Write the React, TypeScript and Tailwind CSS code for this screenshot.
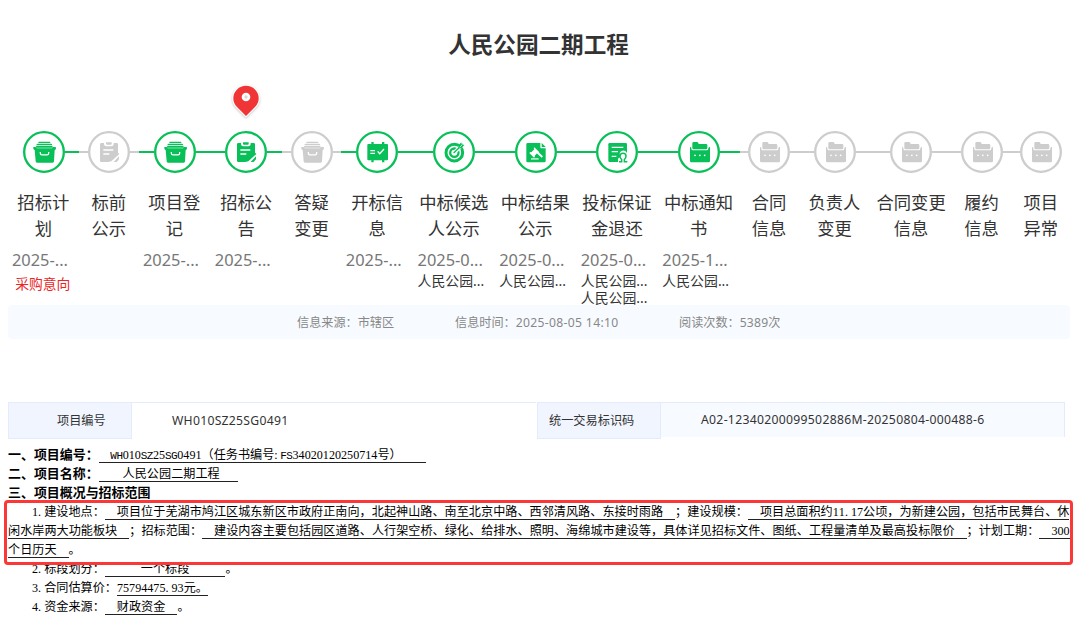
import React from "react";

type IconName = "box" | "note" | "board" | "target" | "gavel" | "deposit" | "folder";

interface Step {
  lines: [string, string];
  icon: IconName;
  done: boolean;
  date?: string;
  notes?: string[];
  link?: string;
  pin?: boolean;
  width: string;
}

const W2 = "w-[59.200px]";
const W3 = "w-[71.800px]";
const W4 = "w-[81.600px]";

const steps: Step[] = [
  { lines: ["招标计", "划"], icon: "box", done: true, date: "2025-...", link: "采购意向", width: W3 },
  { lines: ["标前", "公示"], icon: "note", done: false, width: W2 },
  { lines: ["项目登", "记"], icon: "box", done: true, date: "2025-...", width: W3 },
  { lines: ["招标公", "告"], icon: "note", done: true, date: "2025-...", pin: true, width: W3 },
  { lines: ["答疑", "变更"], icon: "box", done: false, width: W2 },
  { lines: ["开标信", "息"], icon: "board", done: true, date: "2025-...", width: W3 },
  { lines: ["中标候选", "人公示"], icon: "target", done: true, date: "2025-0...", notes: ["人民公园..."], width: W4 },
  { lines: ["中标结果", "公示"], icon: "gavel", done: true, date: "2025-0...", notes: ["人民公园..."], width: W4 },
  { lines: ["投标保证", "金退还"], icon: "deposit", done: true, date: "2025-0...", notes: ["人民公园...", "人民公园..."], width: W4 },
  { lines: ["中标通知", "书"], icon: "folder", done: true, date: "2025-1...", notes: ["人民公园..."], width: W4 },
  { lines: ["合同", "信息"], icon: "folder", done: false, width: W2 },
  { lines: ["负责人", "变更"], icon: "folder", done: false, width: W3 },
  { lines: ["合同变更", "信息"], icon: "folder", done: false, width: W4 },
  { lines: ["履约", "信息"], icon: "folder", done: false, width: W2 },
  { lines: ["项目", "异常"], icon: "folder", done: false, width: W2 },
];

function Glyph({ name }: { name: IconName }) {
  switch (name) {
    case "box":
      return (
        <>
          <rect x="46" y="32.500" width="36" height="3.500" rx="1.700" />
          <path d="M44 38.500h40q3 0 4 4H40q1-4 4-4z" />
          <path d="M40 45h48l2 5H38z" />
          <path d="M32 48h6l3 3.500h46l3-3.500h6q4 0 3 4l-1 3q0 2-3 2l-2 34q0 4-4 4H42q-4 0-4-4l-3-34q-3 0-3-2l-1-3q-1-4 1-4z" />
          <path d="M52 63v3.500q0 5 5 5h15q5 0 5-5V63" fill="none" stroke="#fff" strokeWidth="4" />
        </>
      );
    case "note":
      return (
        <>
          <path d="M40 36h8v3q0 7 7 7h15q7 0 7-7v-3h9q4 0 4 4v53H40q-4 0-4-4V40q0-4 4-4z" />
          <path d="M54 34h17v4q0 3-3 3H57q-3 0-3-3z" />
          <path d="M46 57h30M46 69h18" stroke="#fff" strokeWidth="4" />
          <path d="M58 96L89 65l8 4v27z" fill="#fff" />
          <path d="M61 93l3-8 24-22 6 6-24 22zM77 93l16-17v9l-7 8z" />
        </>
      );
    case "board":
      return (
        <>
          <path d="M37 39h9v-6h7v6h25v-6h7v6h8q3 0 3 3v43q0 3-3 3h-8v6h-7v-6H53v6h-7v-6h-9q-3 0-3-3V42q0-3 3-3z" />
          <path d="M43 59h14M43 67h14" stroke="#fff" strokeWidth="4" />
          <path d="M65 61l6 7 13-14" fill="none" stroke="#fff" strokeWidth="4" />
        </>
      );
    case "target":
      return (
        <>
          <circle cx="64" cy="65" r="25" fill="none" stroke="currentColor" strokeWidth="9" />
          <circle cx="64" cy="65" r="12.500" fill="none" stroke="currentColor" strokeWidth="7" />
          <path d="M64 65L93 36" stroke="#fff" strokeWidth="11" />
          <path d="M62 66L90 39" stroke="currentColor" strokeWidth="4" />
          <path d="M76 52v-9l9-9 1 7 8 1-9 10z" />
          <path d="M80 49l9-9" stroke="#fff" strokeWidth="2" />
        </>
      );
    case "gavel":
      return (
        <>
          <path d="M38 36h38v13q0 3 3 3h13v38q0 4-4 4H38q-4 0-4-4V40q0-4 4-4z" />
          <path d="M80 36l12 12H80z" />
          <g fill="#fff">
            <path d="M58 49l15 15-3 3-3-1-8 8 1 3-3 3-14-14 3-3 3 1 9-9-2-3z" />
            <path d="M65 67l5-4 14 13-4 4z" />
            <rect x="48" y="82" width="23" height="3.500" />
          </g>
        </>
      );
    case "deposit":
      return (
        <>
          <rect x="37" y="36" width="56" height="57" rx="4" />
          <path d="M47 49h35M47 62h19M47 76h14" stroke="#fff" strokeWidth="4" />
          <path d="M66 96V83l7-6q-5-10 2-16 7-5 14 0 5 4 4 10h4v25z" fill="#fff" />
          <path
            d="M69 92h8v-6q-5-4-5-10 0-9 9-9t9 9q0 6-5 10v6h9"
            fill="none"
            stroke="currentColor"
            strokeWidth="4.500"
          />
        </>
      );
    case "folder":
      return (
        <>
          <path d="M47 33h10q3 0 4 3l1 3h22q4 0 4 4v8q0 4-4 4H47q-4 0-4-4V37q0-4 4-4z" />
          <path d="M36 47l4 3v3q0 4.500 5 4.500h41q5 0 5-4.500v-3l5-3v43q0 4-4 4H40q-4 0-4-4z" />
          <g fill="#fff">
            <circle cx="51" cy="73" r="2.600" />
            <circle cx="65.500" cy="73" r="2.600" />
            <circle cx="80" cy="73" r="2.600" />
          </g>
        </>
      );
  }
}

function Pin() {
  return (
    <svg
      viewBox="0 0 32 38"
      className="absolute -top-[49px] left-1/2 h-[38px] w-8 -translate-x-1/2 drop-shadow-[0_1px_1px_rgba(0,0,0,0.22)]"
    >
      <path
        d="M16 3.800a12.700 12.700 0 0 0-12.700 12.700c0 4 1.800 6.600 4.200 9L16 34l8.500-8.500c2.400-2.400 4.200-5 4.200-9A12.700 12.700 0 0 0 16 3.800z"
        fill="#ef3535"
        stroke="#fff"
        strokeWidth="2.400"
        strokeLinejoin="round"
        paintOrder="stroke"
      />
      <circle cx="16" cy="15" r="4.300" fill="#fff" />
      <circle cx="16" cy="15" r="1.700" fill="#d8d8d8" />
    </svg>
  );
}

function StepCell({ step, first, last }: { step: Step; first: boolean; last: boolean }) {
  const line = step.done ? "bg-[#08bf58]" : "bg-[#cdcdcd]";
  return (
    <div className={`${step.width} shrink-0`}>
      <div className="flex h-[42px] items-center">
        <div className={`h-[1.500px] flex-1 ${first ? "" : line}`} />
        <div className={`relative h-[42px] w-[42px] shrink-0 ${step.done ? "text-[#08bf58]" : "text-[#cdcdcd]"}`}>
          {step.pin && <Pin />}
          <svg viewBox="0 0 126 126" className="h-full w-full" fill="currentColor">
            <circle cx="63" cy="63" r="59.500" fill="#fff" stroke="currentColor" strokeWidth="7" />
            <Glyph name={step.icon} />
          </svg>
        </div>
        <div className={`h-[1.500px] flex-1 ${last ? "" : line}`} />
      </div>
      <div className="mt-[17px] pr-[0.600px] text-center text-[17.300px] leading-[26px] whitespace-nowrap text-[#333]">
        <div>{step.lines[0]}</div>
        <div>{step.lines[1]}</div>
      </div>
      <div className="mt-[5px] h-[25px] pl-[4.300px] text-[16.400px] leading-[25px] whitespace-nowrap text-[#777]">{step.date}</div>
      {step.notes?.map((note, i) => (
        <div key={i} className="pl-[4.300px] text-[13.900px] leading-[17.300px] whitespace-nowrap text-[#333]">
          {note}
        </div>
      ))}
      {step.link && <div className="mt-0.5 pr-[1.600px] text-center text-[13.800px] leading-[20px] text-[#e92525]">{step.link}</div>}
    </div>
  );
}

function U({ children, className = "" }: { children: React.ReactNode; className?: string }) {
  return <span className={`border-b border-[#222] ${className}`}>{children}</span>;
}

/* Half-width characters, each set in a cell of half an em */
function Half({ text }: { text: string }) {
  return (
    <>
      {text.split("").map((ch, i) => (
        <span
          key={i}
          className={`inline-flex w-[6.070px] tracking-normal leading-none ${/[.:]/.test(ch) ? "justify-start" : "justify-center"} ${/[A-Z]/.test(ch) ? "font-['Liberation_Mono'] text-[11px]" : ""}`}
        >
          {ch}
        </span>
      ))}
    </>
  );
}

function Row({ children, className = "" }: { children: React.ReactNode; className?: string }) {
  return <div className={`h-[19.100px] whitespace-nowrap ${className}`}>{children}</div>;
}

function Heading({ children }: { children: React.ReactNode }) {
  return <span className="text-[12.950px] font-bold tracking-normal">{children}</span>;
}

export default function App() {
  return (
    <div className="h-[619px] w-[1080px] overflow-hidden bg-white font-['Noto_Sans','Noto_Sans_CJK_SC',sans-serif]">
      <h1 className="pt-[29px] pr-[3px] text-center text-[22.600px] leading-8 font-bold text-[#333]">人民公园二期工程</h1>

      <div className="mt-[70px] flex h-[174px] pl-[7.700px]">
        {steps.map((step, i) => (
          <StepCell key={i} step={step} first={i === 0} last={i === steps.length - 1} />
        ))}
      </div>

      <div className="mr-[10px] ml-2 flex h-[34px] items-center rounded bg-[#f7fbff] pt-0.5 pl-[289px] text-[12.150px] whitespace-nowrap text-[#888]">
        <span className="w-[158px]">信息来源：市辖区</span>
        <span className="w-[224px]">
          信息时间：<span className="tracking-[0.330px]">2025-08-05 14:10</span>
        </span>
        <span>
          阅读次数：<span className="tracking-[0.200px]">5389</span>次
        </span>
      </div>

      <div className="mt-[63px] ml-2 flex h-[37px] text-[12.200px] text-[#333]">
        <div className="flex w-[124px] items-center border border-[#e5ebff] bg-[#f1f5ff] pt-px pl-12">项目编号</div>
        <div className="flex w-[404px] items-center border-t border-[#e5ebff] pl-10 tracking-[0.270px]">WH010SZ25SG0491</div>
        <div className="ml-px flex w-[124px] items-center border border-[#e5ebff] bg-[#f1f5ff] pt-px pl-[11px]">
          统一交易标识码
        </div>
        <div className="flex h-[35px] w-[404px] items-center border-t border-r border-[#e5ebff] bg-[#f7faff] pt-px pl-10 tracking-[0.300px]">
          A02-12340200099502886M-20250804-000488-6
        </div>
      </div>

      <div className="relative mt-[6px] pl-2 font-['Liberation_Serif','Noto_Sans_CJK_SC',serif] text-[12.100px] leading-[19.100px] tracking-[0.045px] text-black">
        <Row>
          <Heading>一、项目编号：</Heading>
          <U className="pr-6 pl-3">
            <Half text="WH010SZ25SG0491" />（任务书编号
            <Half text=":FS34020120250714" />号）
          </U>
        </Row>
        <Row>
          <Heading>二、项目名称：</Heading>
          <U className="pr-[18px] pl-6">人民公园二期工程</U>
        </Row>
        <Row>
          <Heading>三、项目概况与招标范围</Heading>
        </Row>
        <div className="pt-[0.600px]">
          <Row className="pl-6">
            <Half text="1." />
            建设地点：
            <U className="px-3">项目位于芜湖市鸠江区城东新区市政府正南向，北起神山路、南至北京中路、西邻清风路、东接时雨路</U>
            ；建设规模：
            <U className="pl-3">
              项目总面积约
              <Half text="11.17" />
              公顷，为新建公园，包括市民舞台、休
            </U>
          </Row>
          <Row>
            <U className="pr-3">闲水岸两大功能板块</U>；招标范围：
            <U className="px-3">建设内容主要包括园区道路、人行架空桥、绿化、给排水、照明、海绵城市建设等，具体详见招标文件、图纸、工程量清单及最高投标限价</U>
            ；计划工期：
            <U className="pl-3">
              <Half text="300" />
            </U>
          </Row>
          <Row>
            <U className="pr-3">个日历天</U>。
          </Row>
          <Row className="pl-6">
            <Half text="2." />
            标段划分：<U className="px-9">一个标段</U>。
          </Row>
          <Row className="pl-6">
            <Half text="3." />
            合同估算价：
            <U>
              <Half text="75794475.93" />
              元。
            </U>
          </Row>
          <Row className="pl-6">
            <Half text="4." />
            资金来源：<U className="px-3">财政资金</U>。
          </Row>
        </div>
        <div className="absolute top-[55px] left-1 h-[65px] w-[1069px] rounded-[4px] border-[3.500px] border-[#fb3737]" />
      </div>
    </div>
  );
}
